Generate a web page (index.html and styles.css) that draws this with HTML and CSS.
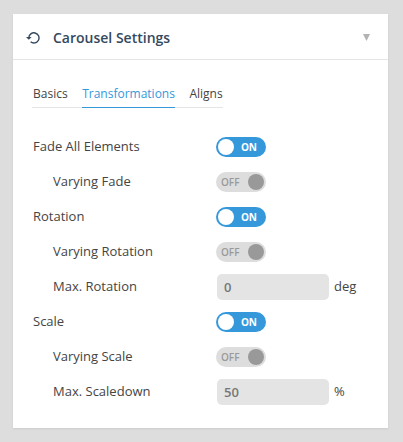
FILE: index.html
```html
<!DOCTYPE html>
<html lang="en">
<head>
<meta charset="utf-8">
<title>Carousel Settings</title>
<link rel="stylesheet" href="styles.css">
</head>
<body>
<section class="card">
  <header class="card-header">
    <svg class="icon" width="14" height="14" viewBox="0 0 14 14"><path d="M2.8 6.8A5.1 5.1 0 1 1 4.6 10.8" fill="none" stroke="#34495e" stroke-width="1.4"/><path d="M0 6H5.6L2.8 8.8Z" fill="#34495e"/></svg>
    <h1 class="title">Carousel Settings</h1>
    <svg class="arrow" width="7" height="7" viewBox="0 0 7 7"><path d="M0 0H7L3.5 7Z" fill="#b3b3b3"/></svg>
  </header>
  <nav class="tabs">
    <span class="tab">Basics</span>
    <span class="tab active">Transformations</span>
    <span class="tab">Aligns</span>
  </nav>
  <div class="rows">
    <div class="row"><span class="label">Fade All Elements</span><span class="switch on"><i class="knob"></i><b class="state">ON</b></span></div>
    <div class="row sub"><span class="label">Varying Fade</span><span class="switch"><b class="state">OFF</b><i class="knob"></i></span></div>
    <div class="row"><span class="label">Rotation</span><span class="switch on"><i class="knob"></i><b class="state">ON</b></span></div>
    <div class="row sub"><span class="label">Varying Rotation</span><span class="switch"><b class="state">OFF</b><i class="knob"></i></span></div>
    <div class="row sub"><span class="label">Max. Rotation</span><input class="field" type="text" value="0"><span class="unit">deg</span></div>
    <div class="row"><span class="label">Scale</span><span class="switch on"><i class="knob"></i><b class="state">ON</b></span></div>
    <div class="row sub"><span class="label">Varying Scale</span><span class="switch"><b class="state">OFF</b><i class="knob"></i></span></div>
    <div class="row sub"><span class="label">Max. Scaledown</span><input class="field" type="text" value="50"><span class="unit">%</span></div>
  </div>
</section>
</body>
</html>
```

FILE: styles.css
```css
* { box-sizing: border-box; }
body {
  margin: 0;
  padding: 14px 15px 14px 13px;
  background: #ddd;
  color: #444;
  font: 13px/18px "Open Sans", sans-serif;
}
.card {
  height: 414px;
  background: #fff;
  box-shadow: 0 1px 2px rgba(0, 0, 0, .08);
}
.card-header {
  display: flex;
  align-items: center;
  height: 46px;
  padding: 0 18px 0 13px;
  border-bottom: 1px solid #e5e5e5;
}
.icon { margin-top: 3px; }
.title {
  flex: 1;
  margin: 3px 0 0 13px;
  color: #34495e;
  font-size: 14px;
  font-weight: 600;
  line-height: 20px;
}
.arrow { margin: 1px 0 0; }
.tabs {
  display: flex;
  gap: 14.5px;
  width: 191px;
  height: 23px;
  margin: 25px 0 0 19px;
  padding-left: 1px;
  border-bottom: 1px solid #e5e5e5;
  font-size: 12px;
}
.tab { height: 23px; white-space: nowrap; }
.active {
  border-bottom: 1px solid #3498db;
  color: #3498db;
}
.rows { margin: 22px 0 0 20px; }
.row {
  display: flex;
  align-items: flex-start;
  height: 35px;
}
.label {
  width: 183px;
  padding-top: 7px;
}
.sub .label { padding-left: 20px; }
.switch {
  display: flex;
  align-items: center;
  justify-content: space-between;
  width: 50px;
  height: 20px;
  margin-top: 7px;
  padding: 0 2px 0 5px;
  border-radius: 10px;
  background: #ddd;
  color: #999;
}
.on {
  padding: 0 9px 0 2px;
  background: #3498db;
  color: #fff;
}
.knob {
  width: 16px;
  height: 16px;
  border-radius: 50%;
  background: #999;
}
.on .knob { background: #fff; }
.state {
  padding-bottom: 1px;
  font-size: 10px;
  font-weight: 600;
}
.on .state { font-weight: 700; }
.field {
  width: 112px;
  height: 26px;
  margin: 4px 0 0 1px;
  padding: 0 7px 1px;
  border: 0;
  border-radius: 5px;
  background: #e4e4e4;
  color: #777;
  font: 600 13px/18px "Open Sans", sans-serif;
}
.unit { padding: 7px 0 0 5px; }
```
